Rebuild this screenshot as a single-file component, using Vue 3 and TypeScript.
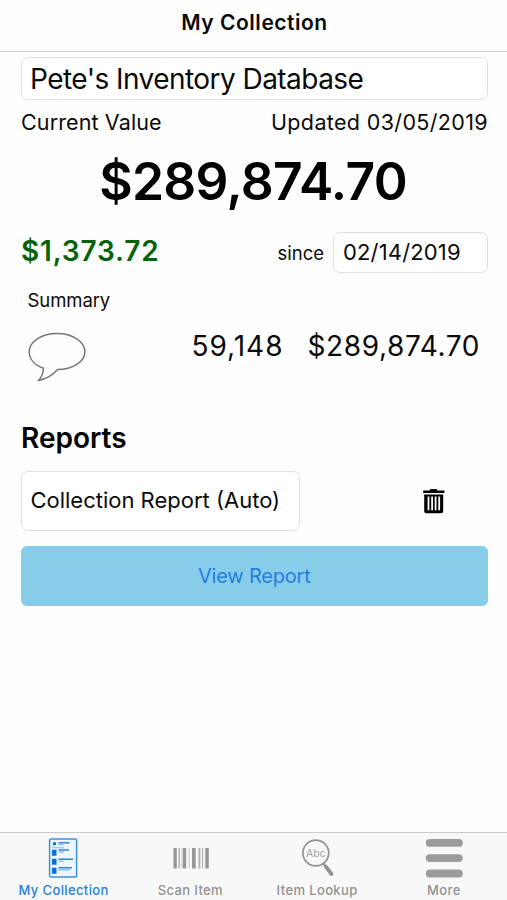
<script setup lang="ts">
import { ref } from 'vue'

interface Tab {
  id: string
  label: string
}

const tabs: Tab[] = [
  { id: 'collection', label: 'My Collection' },
  { id: 'scan', label: 'Scan Item' },
  { id: 'lookup', label: 'Item Lookup' },
  { id: 'more', label: 'More' },
]
const active = ref('collection')
</script>

<template>
  <div class="screen">
    <header class="header"><h1 class="title">My Collection</h1></header>

    <main class="content">
      <div class="field name-field"><span class="name">Pete's Inventory Database</span></div>
      <div class="row value-row">
        <span class="current">Current Value</span>
        <span class="updated">Updated 03/05/2019</span>
      </div>
      <div class="total"><span class="total-text">$289,874.70</span></div>
      <div class="row change-row">
        <span class="change">$1,373.72</span>
        <div class="since-group">
          <span class="since">since</span>
          <div class="field date-field"><span class="date">02/14/2019</span></div>
        </div>
      </div>
      <div class="summary"><span class="summary-text">Summary</span></div>
      <div class="row summary-row">
        <svg class="bubble" width="60" height="52" viewBox="0 0 60 52">
          <path
            d="M16.400 38.200C7 35 2.200 28.500 2.200 21.700C2.200 11.600 14.600 3.600 30 3.600S57.900 11.600 57.900 21.700S45.500 39.600 30.500 39.600C25.600 45.500 18.500 49.300 11.200 50.500C14.600 47.300 16.300 42.600 16.400 38.200Z"
            fill="none" stroke="#777" stroke-width="1.500" stroke-linejoin="round"
          />
        </svg>
        <div class="figures">
          <span class="count">59,148</span>
          <span class="sum">$289,874.70</span>
        </div>
      </div>
      <h2 class="reports"><span class="reports-text">Reports</span></h2>
      <div class="row report-row">
        <div class="field report-field"><span class="report">Collection Report (Auto)</span></div>
        <svg class="trash" width="24" height="28" viewBox="0 0 24 28">
          <path d="M1.200 6V3.600H7.500L8.500 2.100H14.500L15.500 3.600H22.400V6Z" />
          <path
            fill-rule="evenodd"
            d="M2.200 7.600H21.200V24.200Q21.200 26.300 19.100 26.300H4.300Q2.200 26.300 2.200 24.200ZM5.600 9.600V23.200H7.400V9.600ZM9.200 9.600V23.200H11V9.600ZM12.700 9.600V23.200H14.500V9.600ZM16.300 9.600V23.200H18.100V9.600Z"
          />
        </svg>
      </div>
      <button class="view" type="button"><span class="view-text">View Report</span></button>
    </main>

    <nav class="tabs">
      <a
        v-for="tab in tabs" :key="tab.id"
        class="tab" :class="[tab.id, { active: active === tab.id }]"
        @click="active = tab.id"
      >
        <svg v-if="tab.id === 'collection'" class="icon" width="40" height="42" viewBox="0 0 40 42">
          <rect x="6.600" y="2" width="27" height="38" rx="1.500" fill="#edf6ff" stroke="#3e8fe0" stroke-width="1.500" />
          <circle cx="11.500" cy="6.700" r="1.800" fill="#0a6fdc" />
          <path d="M9 12.700h4.500v6h-4.500zM9 21.700h4.500v6h-4.500zM9 30.700h4.500v6h-4.500z" fill="#0a6fdc" />
          <path d="M15.500 5.700h11M15.500 13h10.500M15.500 22.200h14.500M15.500 30.700h13.500" stroke="#3083de" stroke-width="1.500" />
          <path d="M15 7.700h6M9 10.700h12M15.500 15.100h5.500M15.500 24.200h5M15.500 32.900h11.500" stroke="#7eb7ef" stroke-width="1.100" />
        </svg>
        <svg v-else-if="tab.id === 'scan'" class="icon" width="40" height="42" viewBox="0 0 40 42">
          <path d="M3.500 11h3.300v20.500h-3.300zM12.700 11h3.500v20.500h-3.500zM22 11h3.700v20.500h-3.700zM35.300 11h3.500v20.500h-3.500z" fill="#969696" />
          <path d="M8.400 11h1.600v20.500h-1.600zM28.400 11h2v20.500h-2zM32 11h1.200v20.500h-1.200z" fill="#b5b5b5" />
          <path d="M11 11h.7v20.500h-.7zM18.700 11h1.200v20.500h-1.200z" fill="#cfcfcf" />
        </svg>
        <svg v-else-if="tab.id === 'lookup'" class="icon" width="40" height="42" viewBox="0 0 40 42">
          <circle cx="18.800" cy="16" r="12.900" fill="none" stroke="#929292" stroke-width="1.700" />
          <path d="M26.500 26.800l3 3.800" stroke="#929292" stroke-width="2.200" />
          <path d="M29 29.800l5.500 7.200" stroke="#929292" stroke-width="3.800" stroke-linecap="round" />
          <text x="18.900" y="19.700" class="abc">Abc</text>
        </svg>
        <svg v-else class="icon" width="40" height="42" viewBox="0 0 40 42">
          <path d="M5.700 5.900h29.200M5.700 21.100h29.200M5.700 36.500h29.200" stroke="#9b9b9b" stroke-width="7.800" stroke-linecap="round" />
        </svg>
        <span class="tab-label">{{ tab.label }}</span>
      </a>
    </nav>
  </div>
</template>

<style>
body { margin: 0; background: #fefefe; }
</style>

<style scoped>
* { box-sizing: border-box; }
.screen {
  height: 900px;
  display: flex;
  flex-direction: column;
  background: #fefefe;
  color: #0a0a0a;
  font-family: Inter, "Liberation Sans", sans-serif;
  white-space: nowrap;
}
.header {
  height: 52px;
  padding: 0 0 7px 2px;
  border-bottom: 1px solid #cfcfcf;
  display: flex;
  align-items: center;
  justify-content: center;
}
.title { margin: 0; font-size: 21px; font-weight: 600; letter-spacing: 0.52px; }
.content { flex: 1; padding: 5px 19px 0 20.600px; }
.row { display: flex; align-items: center; justify-content: space-between; }
.field {
  display: flex;
  align-items: center;
  border: 1.500px solid #e0e0e0;
  border-radius: 7px;
  background: #fff;
}
.name-field { height: 43px; padding-left: 8.400px; }
.name { font-size: 28px; letter-spacing: -0.55px; }
.value-row { height: 44px; padding: 0 0 0 0.400px; }
.current { font-size: 21.500px; letter-spacing: 0.12px; }
.updated { font-size: 21.500px; letter-spacing: 0.35px; }
.total { height: 75px; padding-bottom: 2px; display: flex; align-items: center; justify-content: center; }
.total-text { font-size: 51.500px; font-weight: 600; color: #000; letter-spacing: -0.7px; margin-right: 2.500px; }
.change-row { height: 67px; }
.change { font-size: 28px; font-weight: 600; color: #066206; padding-left: 0.400px; margin-top: -4px; letter-spacing: 0.85px; }
.since-group { display: flex; align-items: center; gap: 9px; }
.since { font-size: 18.500px; }
.date-field { width: 155px; height: 41px; padding: 0 0 1px 9px; }
.date { font-size: 22px; letter-spacing: 0.15px; }
.summary { height: 26px; display: flex; align-items: center; padding: 1px 0 0 7px; }
.summary-text { font-size: 18.500px; letter-spacing: -0.1px; }
.summary-row { height: 74px; padding: 0 8px 0 6.400px; align-items: flex-start; }
.bubble { margin-top: 18px; }
.figures { display: flex; gap: 24px; height: 67px; align-items: center; }
.count { font-size: 28px; letter-spacing: 1px; }
.sum { font-size: 28px; letter-spacing: 0.6px; }
.reports { margin: 0; height: 85px; padding: 18px 0 0 0.400px; display: flex; align-items: center; }
.reports-text { font-size: 28px; font-weight: 600; color: #000; }
.report-row { height: 60px; padding-right: 42px; }
.report-field { width: 279.400px; height: 60px; padding: 0 0 2px 8.800px; }
.report { font-size: 22px; letter-spacing: 0; }
.view {
  width: 100%;
  height: 60px;
  margin-top: 15px;
  border: 0;
  border-radius: 6px;
  background: #87cdea;
  color: #1e7fe2;
  font-family: inherit;
}
.view-text { font-size: 20px; letter-spacing: -0.2px; }
.tabs {
  height: 68px;
  border-top: 1px solid #cacaca;
  background: #f8f8f8;
  display: flex;
}
.tab { flex: 1; display: flex; flex-direction: column; align-items: center; color: #929292; padding-top: 4px; }
.tab.active { color: #2580df; }
.icon { flex-shrink: 0; }
.tab-label { margin-top: 2px; font-size: 13px; font-weight: 500; line-height: 18px; letter-spacing: 0.38px; padding-left: 0.500px; }
.abc { font-size: 10.500px; text-anchor: middle; fill: #a2a2a2; }
</style>
